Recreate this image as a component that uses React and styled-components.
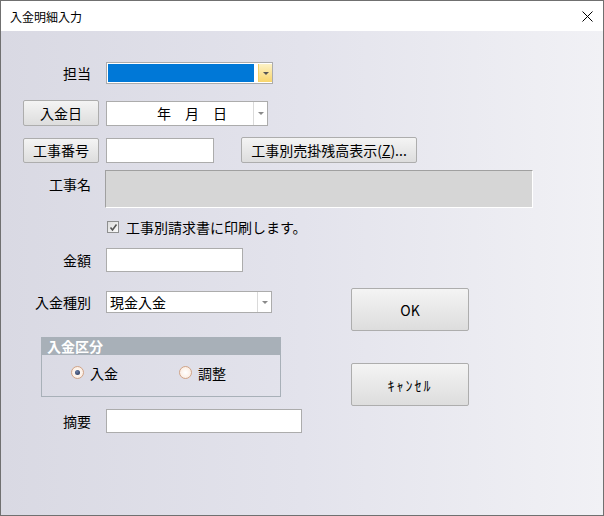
import React from "react";
import styled, { createGlobalStyle } from "styled-components";

const GlobalStyle = createGlobalStyle`
  html, body {
    margin: 0;
    padding: 0;
    background: #ffffff;
  }
  body {
    font-family: "Noto Sans CJK JP", "Liberation Sans", sans-serif;
    font-size: 14px;
    color: #000;
  }
  * {
    box-sizing: border-box;
  }
`;

const Window = styled.div`
  width: 604px;
  height: 516px;
  border: 1px solid #707070;
  display: flex;
  flex-direction: column;
  overflow: hidden;
`;

const TitleBar = styled.div`
  height: 30px;
  flex: none;
  background: #fff;
  display: flex;
  align-items: center;
  padding: 0 10px 0 9px;
`;

const Title = styled.span`
  font-size: 12px;
  line-height: 14px;
  margin-top: 2px;
`;

const CloseIcon = styled.svg`
  margin-left: auto;
  margin-top: 1px;
  width: 11px;
  height: 11px;
`;

const Body = styled.div`
  flex: 1;
  background: linear-gradient(to right, #d9d9e3, #e3e3ec 50%, #f1f1f5);
  padding: 31px 0 0 22px;
  display: flex;
  flex-direction: column;
`;

const Row = styled.div`
  display: flex;
  align-items: ${(p) => p.$align || "center"};
  gap: 7px;
  margin-top: ${(p) => p.$top || 0}px;
  height: ${(p) => p.$height}px;
`;

const LabelCell = styled.div`
  width: 76px;
  flex: none;
  text-align: right;
  padding-right: 8px;
  line-height: 20px;
  padding-top: ${(p) => p.$padTop || 0}px;
`;

const PushButton = styled.button`
  width: ${(p) => p.$width}px;
  height: ${(p) => p.$height}px;
  flex: none;
  margin-left: ${(p) => p.$left || 0}px;
  background: linear-gradient(#f4f4f4, #dddddd);
  border: 1px solid #adadad;
  border-radius: 2px;
  font-family: inherit;
  font-size: 14px;
  letter-spacing: ${(p) => p.$spacing || 0}px;
  color: #000;
  padding: 0;
  display: flex;
  align-items: center;
  justify-content: center;
`;

const TextBox = styled.div`
  width: ${(p) => p.$width}px;
  height: ${(p) => p.$height}px;
  background: #fff;
  border: 1px solid #acacac;
  flex: none;
`;

const NameBox = styled.div`
  width: 428px;
  height: 38px;
  margin-left: -1px;
  background: #d6d6d6;
  border-top: 1px solid #a0a0a0;
  border-left: 1px solid #a0a0a0;
  border-right: 1px solid #fff;
  border-bottom: 1px solid #fff;
`;

const Combo = styled.div`
  width: ${(p) => p.$width}px;
  height: ${(p) => p.$height}px;
  flex: none;
  background: #fff;
  border: 1px solid #acacac;
  display: flex;
  padding: ${(p) => (p.$active ? "1px 0 0 1px" : "0")};
`;

const ComboValue = styled.div`
  flex: 1;
  display: flex;
  align-items: center;
  padding-left: ${(p) => p.$pad || 3}px;
  background: ${(p) => (p.$selected ? "#0078d7" : "transparent")};
  margin-right: ${(p) => (p.$selected ? 4 : 0)}px;
  margin-bottom: ${(p) => (p.$selected ? 1 : 0)}px;
  white-space: pre;
  line-height: 18px;
`;

const DropButton = styled.div`
  width: 14px;
  flex: none;
  display: flex;
  align-items: center;
  justify-content: center;
  border-left: 1px solid ${(p) => (p.$hot ? "#f2cf67" : "#dadada")};
  background: ${(p) => (p.$hot ? "linear-gradient(#fdf2c6, #f8d56c)" : "#fff")};
  margin: ${(p) => (p.$hot ? "0 0 1px 0" : "0")};
`;

const Arrow = styled.span`
  width: 0;
  height: 0;
  border-left: 3px solid transparent;
  border-right: 3px solid transparent;
  border-top: 3px solid ${(p) => (p.$hot ? "#555" : "#8a8a8a")};
`;

const CheckRow = styled.label`
  display: flex;
  align-items: center;
  gap: 7px;
  margin-left: 84px;
  margin-top: 13px;
  height: 12px;
  line-height: 14px;
`;

const CheckBox = styled.span`
  width: 12px;
  height: 12px;
  flex: none;
  border: 1px solid #8e8f8f;
  background: linear-gradient(135deg, #dcdcdc, #fbfbfb);
  display: flex;
  align-items: center;
  justify-content: center;
`;

const Lower = styled.div`
  display: flex;
  margin-top: 16px;
  height: 118px;
`;

const LeftColumn = styled.div`
  width: 328px;
  flex: none;
  display: flex;
  flex-direction: column;
`;

const RightColumn = styled.div`
  display: flex;
  flex-direction: column;
  gap: 32px;
`;

const GroupBox = styled.div`
  width: 240px;
  height: 60px;
  margin: 24px 0 0 18px;
  border: 1px solid #a8b0b8;
  display: flex;
  flex-direction: column;
`;

const GroupHeader = styled.div`
  height: 17px;
  background: #a8b0b8;
  color: #fff;
  font-weight: bold;
  font-size: 14px;
  line-height: 17px;
  padding-left: 5px;
`;

const RadioRow = styled.div`
  display: flex;
  gap: 61px;
  padding: 11px 0 0 29px;
`;

const RadioItem = styled.label`
  display: flex;
  align-items: center;
  gap: 6px;
  height: 13px;
  line-height: 14px;
`;

const RadioDot = styled.span`
  width: 13px;
  height: 13px;
  flex: none;
  border-radius: 50%;
  border: 1px solid #d1a487;
  background: radial-gradient(circle at 50% 50%, #ffffff 0%, #fbeee4 70%, #f1d8c6 100%);
  display: flex;
  align-items: center;
  justify-content: center;

  &::after {
    content: "";
    display: ${(p) => (p.$checked ? "block" : "none")};
    width: 5px;
    height: 5px;
    border-radius: 50%;
    background: radial-gradient(circle at 40% 35%, #6b7fa8, #1f2d4c);
  }
`;

const Combo2 = ({ width, height, value, pad, active, selected }) => (
  <Combo $width={width} $height={height} $active={active}>
    <ComboValue $pad={pad} $selected={selected}>
      {value}
    </ComboValue>
    <DropButton $hot={active}>
      <Arrow $hot={active} />
    </DropButton>
  </Combo>
);

export default function App() {
  return (
    <>
      <GlobalStyle />
      <Window>
        <TitleBar>
          <Title>入金明細入力</Title>
          <CloseIcon viewBox="0 0 11 11">
            <path d="M0.5 0.5 L10.5 10.5 M10.5 0.5 L0.5 10.5" stroke="#000" strokeWidth="1" fill="none" />
          </CloseIcon>
        </TitleBar>
        <Body>
          <Row $height={22}>
            <LabelCell>担当</LabelCell>
            <Combo2 width={167} height={22} value="" active selected />
          </Row>
          <Row $top={16} $height={26}>
            <PushButton $width={76} $height={26}>入金日</PushButton>
            <Combo2 width={162} height={25} value={"年　月　日"} pad={50} />
          </Row>
          <Row $top={11} $height={26}>
            <PushButton $width={76} $height={25}>工事番号</PushButton>
            <TextBox $width={108} $height={25} />
            <PushButton $width={176} $height={26} $left={20}>
              工事別売掛残高表示(<u>Z</u>)...
            </PushButton>
          </Row>
          <Row $top={7} $height={38} $align="flex-start">
            <LabelCell $padTop={4}>工事名</LabelCell>
            <NameBox />
          </Row>
          <CheckRow>
            <CheckBox>
              <svg width="9" height="9" viewBox="0 0 9 9">
                <path d="M1.5 4.5 L3.5 7 L7.5 1.5" stroke="#555" strokeWidth="1.6" fill="none" />
              </svg>
            </CheckBox>
            工事別請求書に印刷します。
          </CheckRow>
          <Row $top={15} $height={24}>
            <LabelCell>金額</LabelCell>
            <TextBox $width={137} $height={24} />
          </Row>
          <Lower>
            <LeftColumn>
              <Row $top={3} $height={22}>
                <LabelCell>入金種別</LabelCell>
                <Combo2 width={166} height={22} value="現金入金" pad={3} />
              </Row>
              <GroupBox>
                <GroupHeader>入金区分</GroupHeader>
                <RadioRow>
                  <RadioItem>
                    <RadioDot $checked />
                    入金
                  </RadioItem>
                  <RadioItem>
                    <RadioDot />
                    調整
                  </RadioItem>
                </RadioRow>
              </GroupBox>
            </LeftColumn>
            <RightColumn>
              <PushButton $width={118} $height={43}>OK</PushButton>
              <PushButton $width={118} $height={43} $spacing={2}>ｷｬﾝｾﾙ</PushButton>
            </RightColumn>
          </Lower>
          <Row $top={3} $height={24}>
            <LabelCell>摘要</LabelCell>
            <TextBox $width={196} $height={24} />
          </Row>
        </Body>
      </Window>
    </>
  );
}
